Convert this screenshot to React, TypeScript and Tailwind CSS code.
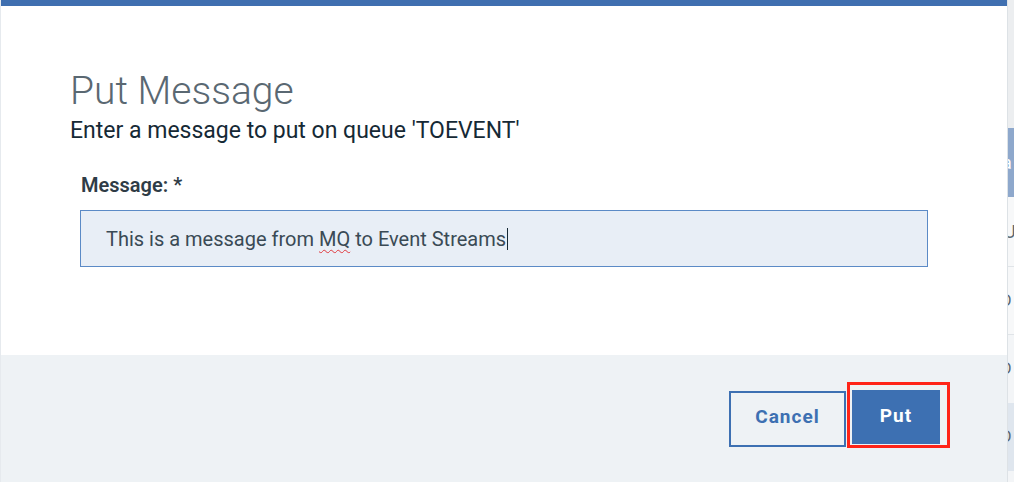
import React from "react";

const font = { fontFamily: "Roboto, 'Noto Sans', sans-serif" };

function SideStrip() {
  return (
    <div className="w-[7px] flex flex-col overflow-hidden border-l border-[#dde2e6] bg-[#f4f5f6] text-[#5a6872]" style={font}>
      <div className="h-[128px] bg-[#eceef0]" />
      <div className="h-[69px] bg-[#8ea8cc] flex items-center text-white text-[18px]">
        <span className="-ml-[6px]">a</span>
      </div>
      <div className="h-[70px] bg-[#f7f8f9] border-b border-[#e0e4e8] flex items-center text-[18px]">
        <span className="-ml-[4px]">U</span>
      </div>
      <div className="h-[68px] bg-[#f7f8f9] border-b border-[#e0e4e8] flex items-center text-[16px]">
        <span className="-ml-[7px]">D</span>
      </div>
      <div className="h-[68px] bg-[#f3f5f7] flex items-center text-[16px]">
        <span className="-ml-[7px]">D</span>
      </div>
      <div className="h-[68px] bg-[#dfe6ee] flex items-center text-[16px]">
        <span className="-ml-[7px]">D</span>
      </div>
      <div className="flex-1 bg-[#f3f5f7]" />
    </div>
  );
}

export default function App() {
  return (
    <div className="flex w-[1014px] h-[482px] overflow-hidden bg-[#eceef0]" style={font}>
      <div className="w-px bg-[#e6eaee]" />
      <div className="flex-1 flex flex-col">
        <div className="h-[355px] bg-white border-t-[6px] border-[#3f6fb0] flex flex-col pl-[69px] pt-[63px]">
          <h1 className="text-[39px] leading-[44px] font-light text-[#5a6872]">Put Message</h1>
          <p className="mt-[4px] text-[23px] leading-[27px] text-[#152935]">
            Enter a message to put on queue 'TOEVENT'
          </p>
          <label className="mt-[30px] ml-[11px] text-[20px] leading-[22px] font-semibold text-[#2f3c46]">
            Message: *
          </label>
          <div className="mt-[14px] ml-[10px] w-[848px] h-[57px] bg-[#e8eef6] border-[1.5px] border-[#5b8ac6] flex items-center pl-[25px] text-[20px] text-[#3a4a55]">
            <span>
              This is a message from{" "}
              <span className="underline decoration-wavy decoration-[#e0393e] decoration-1 underline-offset-[3px]">MQ</span>{" "}
              to Event Streams
            </span>
            <span className="ml-[1px] w-px h-[22px] bg-[#152935]" />
          </div>
        </div>
        <div className="flex-1 bg-[#eef2f5] flex justify-end items-start pt-[35px] pr-[67px]">
          <button className="mt-[1px] w-[117px] h-[56px] pb-[3px] border-2 border-[#3d70b2] text-[#3d70b2] text-[19px] font-bold tracking-[1px] flex items-center justify-center bg-transparent">
            Cancel
          </button>
          <div className="relative ml-[6px]">
            <button className="w-[88px] h-[54px] pb-[2px] bg-[#3d70b2] text-white text-[19px] font-bold tracking-[1px] flex items-center justify-center">
              Put
            </button>
            <div className="absolute left-[-5px] top-[-8px] w-[103px] h-[66px] border-[3px] border-[#ff2418] pointer-events-none" />
          </div>
        </div>
      </div>
      <SideStrip />
    </div>
  );
}
